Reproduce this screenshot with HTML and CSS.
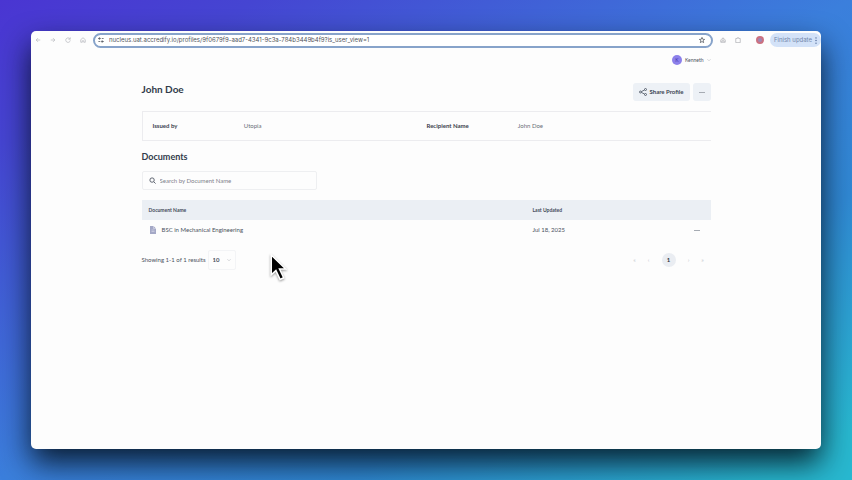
FILE: index.html
```html
<!DOCTYPE html>
<html lang="en">
<head>
    <meta charset="UTF-8">
    <meta name="viewport" content="width=device-width, initial-scale=1.0">
    <title>John Doe</title>
    <link rel="stylesheet" href="styles.css">
</head>
<body>
    <div class="window">
        <div class="toolbar">
            <div class="nav-icons">
                <button class="icon-btn" aria-label="Back"><svg class="icon" viewBox="0 0 16 16"><path d="M14 8H3M8 3L3 8l5 5"/></svg></button>
                <button class="icon-btn" aria-label="Forward"><svg class="icon" viewBox="0 0 16 16"><path d="M2 8h11M8 3l5 5-5 5"/></svg></button>
                <button class="icon-btn" aria-label="Reload"><svg class="icon" viewBox="0 0 16 16"><path d="M13 5a6 6 0 1 0 1 4M14 1v5H9"/></svg></button>
                <button class="icon-btn" aria-label="Home"><svg class="icon" viewBox="0 0 16 16"><path d="M2 7l6-5 6 5v7h-4v-4H6v4H2z"/></svg></button>
            </div>
            <div class="address">
                <svg class="icon dark" viewBox="0 0 16 16"><path d="M1 4h5M10 4h5M1 12h5M10 12h5"/><circle cx="4" cy="4" r="2"/><circle cx="11" cy="12" r="2"/></svg>
                <input class="url" type="text" aria-label="Address" value="nucleus.uat.accredify.io/profiles/9f0679f9-aad7-4341-9c3a-784b3449b4f9?is_user_view=1">
                <button class="icon-btn" aria-label="Bookmark"><svg class="icon dark" viewBox="0 0 16 16"><path d="M8 1l2 5 5 .4-4 3.300 1.400 5.300L8 12l-4.400 3L5 9.700 1 6.400 6 6z"/></svg></button>
            </div>
            <div class="extensions">
                <button class="icon-btn" aria-label="Extension"><svg class="icon" viewBox="0 0 16 16"><path d="M2 14V8l6-6 6 6v6zM5 14v-4h6v4M8 3v5"/></svg></button>
                <button class="icon-btn" aria-label="Extensions"><svg class="icon" viewBox="0 0 16 16"><path d="M2 4h4V2h4v2h4v11H2z"/></svg></button>
                <button class="profile-pic" aria-label="Browser profile"></button>
                <button class="update-btn">Finish update <svg class="dots-icon" viewBox="0 0 4 16"><circle cx="2" cy="2" r="1.500"/><circle cx="2" cy="8" r="1.500"/><circle cx="2" cy="14" r="1.500"/></svg></button>
            </div>
        </div>

        <div class="page">
            <header class="user-bar">
                <button class="user-btn">
                    <span class="avatar">K</span>
                    <span>Kenneth</span>
                    <svg class="chevron" viewBox="0 0 10 10"><path d="M1 3l4 4 4-4"/></svg>
                </button>
            </header>

            <div class="title-row">
                <h1>John Doe</h1>
                <div class="actions">
                    <button class="btn share-btn">
                        <svg class="share-icon" viewBox="0 0 16 16"><circle cx="3" cy="8" r="2"/><circle cx="13" cy="3" r="2"/><circle cx="13" cy="13" r="2"/><path d="M5 7l6-3M5 9l6 3"/></svg>
                        Share Profile
                    </button>
                    <button class="btn more-btn" aria-label="More"><span class="dash"></span></button>
                </div>
            </div>

            <dl class="info">
                <dt>Issued by</dt>
                <dd>Utopia</dd>
                <dt>Recipient Name</dt>
                <dd>John Doe</dd>
            </dl>

            <h2>Documents</h2>
            <label class="search">
                <svg class="search-icon" viewBox="0 0 16 16"><circle cx="7" cy="7" r="5"/><path d="M11 11l4 4"/></svg>
                <input type="text" placeholder="Search by Document Name" aria-label="Search by Document Name">
            </label>

            <table class="documents">
                <thead>
                    <tr>
                        <th class="col-name">Document Name</th>
                        <th>Last Updated</th>
                        <th class="col-more"></th>
                    </tr>
                </thead>
                <tbody>
                    <tr>
                        <td>
                            <div class="doc">
                                <svg class="doc-icon" viewBox="0 0 12 16"><path d="M0 0h7l5 5v11H0z"/><path class="fold" d="M7 0v5h5M3 8h6M3 11h6"/></svg>
                                <span>BSC in Mechanical Engineering</span>
                            </div>
                        </td>
                        <td>Jul 18, 2025</td>
                        <td class="col-more"><button class="icon-btn" aria-label="Row actions"><span class="dash"></span></button></td>
                    </tr>
                </tbody>
            </table>

            <div class="table-footer">
                <div class="results">
                    <label for="pageSize">Showing 1-1 of 1 results</label>
                    <div class="page-size">
                        <select id="pageSize">
                            <option>10</option>
                        </select>
                        <svg class="chevron" viewBox="0 0 10 10"><path d="M1 3l4 4 4-4"/></svg>
                    </div>
                </div>
                <nav class="pagination">
                    <button class="page-btn" aria-label="First page">«</button>
                    <button class="page-btn" aria-label="Previous page">‹</button>
                    <button class="page-btn current">1</button>
                    <button class="page-btn" aria-label="Next page">›</button>
                    <button class="page-btn" aria-label="Last page">»</button>
                </nav>
            </div>
        </div>
    </div>

    <svg class="cursor" viewBox="0 0 16 26"><path d="M1 1v19l4.500-4 4 8.500 3.500-1.600-4-8.400h6z"/></svg>
</body>
</html>
```
FILE: styles.css
```css
* {
    box-sizing: border-box;
}
body {
    font-family: Lato, "Liberation Sans", sans-serif;
    font-size: 6px;
    line-height: 8px;
    display: flex;
    min-height: 100vh;
    margin: 0;
    padding: 31px;
    background: linear-gradient(to bottom right, #4a35d2 0%, #4545d2 15%, #3b7fdc 50%, #3088d4 70%, #28b8d0 95%);
    color: #4b5260;
}
button, input, select {
    font: inherit;
    color: inherit;
    border: none;
    background: none;
    padding: 0;
    margin: 0;
    outline: none;
}
svg {
    fill: none;
    stroke: currentColor;
    flex-shrink: 0;
}
.window {
    flex: 1;
    min-width: 0;
    background: #fdfdfd;
    border-radius: 5px;
    box-shadow: 0 14px 30px rgba(0, 10, 20, 0.85);
}

/* Browser toolbar */
.toolbar {
    display: flex;
    align-items: center;
    height: 18px;
    padding-left: 4px;
    font-family: Inter, "Liberation Sans", sans-serif;
}
.nav-icons {
    display: flex;
    gap: 9px;
    width: 58px;
    color: #b9bbc0;
}
.icon-btn {
    display: flex;
    align-items: center;
}
.icon {
    width: 6px;
    height: 6px;
    stroke-width: 2;
}
.icon.dark {
    color: #50545c;
}
.address {
    flex: 1;
    min-width: 0;
    display: flex;
    align-items: center;
    gap: 5px;
    height: 15px;
    padding: 0 6px 0 3px;
    border: 2px solid #87a3ca;
    border-radius: 8px;
    background: #fff;
}
.url {
    flex: 1;
    min-width: 0;
    color: #50535a;
}
.extensions {
    display: flex;
    align-items: center;
    gap: 9px;
    padding-left: 7px;
    color: #b0b2b7;
}
.profile-pic {
    width: 8px;
    height: 8px;
    margin-left: 6px;
    border-radius: 50%;
    background: #9f86b4;
    border: 2px solid #cb7180;
}
.update-btn {
    display: flex;
    align-items: center;
    gap: 3px;
    height: 14px;
    margin-left: -3px;
    padding: 0 4px;
    border-radius: 7px;
    background: #d3e2f8;
    color: #7286ab;
    white-space: nowrap;
}
.dots-icon {
    width: 2px;
    height: 7px;
    fill: #45608f;
    stroke: none;
}

/* Profile page */
.page {
    max-width: 569px;
    margin: 0 auto;
}
.user-bar {
    display: flex;
    justify-content: flex-end;
    padding-top: 6px;
}
.user-btn {
    display: flex;
    align-items: center;
    gap: 3px;
    font-size: 5px;
}
.avatar {
    width: 10px;
    height: 10px;
    line-height: 10px;
    border-radius: 50%;
    background: #8c80ea;
    color: #4638b0;
    text-align: center;
}
.chevron {
    width: 4px;
    height: 4px;
    color: #9a9ea6;
}
.title-row {
    display: flex;
    justify-content: space-between;
    align-items: flex-start;
    padding-top: 18px;
}
h1, h2 {
    margin: 0;
    font-weight: 700;
    line-height: 12px;
    color: #323b4b;
}
h1 {
    font-size: 10px;
}
h2 {
    margin-top: 10px;
    font-size: 9px;
}
.actions {
    display: flex;
    gap: 3px;
}
.btn {
    display: flex;
    align-items: center;
    justify-content: center;
    gap: 3px;
    height: 18px;
    border-radius: 3px;
    background: #edf1f6;
    color: #3c4554;
}
.share-btn {
    padding: 0 6px;
    font-weight: 700;
}
.more-btn {
    width: 18px;
}
.share-icon {
    width: 8px;
    height: 8px;
    stroke-width: 1.5;
}
.dash {
    width: 6px;
    height: 1px;
    background: #a6abb3;
}
.info {
    display: grid;
    grid-template-columns: 1fr 2fr 1fr 2fr;
    align-items: center;
    height: 30px;
    margin: 10px 0 0;
    padding: 0 10px;
    border: 1px solid #ececef;
    border-right: none;
}
dt {
    font-weight: 700;
    color: #3c424d;
}
dd {
    margin: 0;
    color: #696e78;
}
.search {
    display: flex;
    align-items: center;
    gap: 4px;
    width: 175px;
    height: 19px;
    margin-top: 8px;
    padding: 0 6px;
    border: 1px solid #eeeff1;
    border-radius: 2px;
}
.search input {
    flex: 1;
    min-width: 0;
}
.search input::placeholder {
    color: #7d828b;
    opacity: 1;
}
.search-icon {
    width: 7px;
    height: 7px;
    stroke-width: 2;
}
.documents {
    width: 100%;
    margin-top: 10px;
    border-collapse: collapse;
    text-align: left;
}
.documents th, .documents td {
    height: 20px;
    padding: 0 7px;
}
.documents th {
    background: #ebeff4;
    font-size: 5px;
    font-weight: 700;
    color: #434a5a;
}
.documents .col-name {
    width: 384px;
}
.documents .col-more {
    width: 26px;
    padding: 0 11px;
}
.doc {
    display: flex;
    align-items: center;
    gap: 6px;
    padding-left: 1px;
}
.doc-icon {
    width: 6px;
    height: 8px;
    fill: #a4a8c6;
    stroke: none;
}
.fold {
    fill: none;
    stroke: #e6e7f2;
}
.table-footer {
    display: flex;
    justify-content: space-between;
    align-items: center;
    margin-top: 10px;
}
.results {
    display: flex;
    align-items: center;
    gap: 2px;
}
.page-size {
    display: flex;
    align-items: center;
    width: 28px;
    height: 20px;
    padding: 0 4px;
    border: 1px solid #f3f4f6;
    border-radius: 2px;
}
.page-size select {
    appearance: none;
    flex: 1;
    min-width: 0;
    font-weight: 700;
}
.pagination {
    display: flex;
    align-items: center;
    gap: 4px;
    padding-right: 3px;
}
.page-btn {
    width: 10px;
    height: 14px;
    color: #c3c6cd;
}
.page-btn.current {
    width: 14px;
    margin: 0 4px;
    border-radius: 50%;
    background: #eaedf2;
    color: #2d3440;
    font-weight: 700;
}

/* Mouse pointer floating over the page */
.cursor {
    position: absolute;
    left: 270px;
    top: 254px;
    width: 17px;
    height: 27px;
    fill: #000;
    stroke: #fff;
    stroke-width: 1.5;
    filter: drop-shadow(0 1px 1px rgba(0, 0, 0, 0.4));
}
```
